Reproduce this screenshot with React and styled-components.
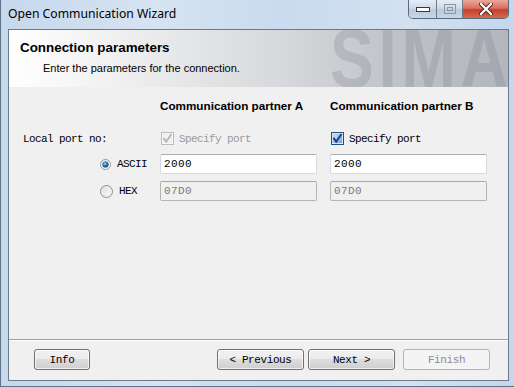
import styled, { createGlobalStyle } from 'styled-components';

const GlobalStyle = createGlobalStyle`
  html, body {
    margin: 0;
    padding: 0;
    width: 514px;
    height: 387px;
    overflow: hidden;
  }
  * {
    box-sizing: border-box;
  }
`;

const Window = styled.div`
  width: 514px;
  height: 387px;
  display: flex;
  flex-direction: column;
  padding: 0 5px 5px 7px;
  border: 1px solid #5f7287;
  border-top: none;
  border-right: none;
  background: linear-gradient(90deg, #c6d8ec 0%, #d6e3f2 30%, #c9dbee 55%, #d3e1f1 80%, #c4d7ec 100%);
`;

const TitleBar = styled.div`
  height: 29px;
  display: flex;
  align-items: flex-start;
  justify-content: space-between;
`;

const Title = styled.div`
  padding-top: 6px;
  font-family: 'Noto Sans', sans-serif;
  font-size: 12.2px;
  line-height: 16px;
  color: #000;
`;

const CaptionGroup = styled.div`
  display: flex;
  height: 19px;
  border: 1px solid #5a6a7e;
  border-top: none;
  border-radius: 0 0 5px 5px;
  overflow: hidden;
`;

const CaptionButton = styled.div`
  width: ${(p) => p.$w}px;
  height: 100%;
  display: flex;
  align-items: center;
  justify-content: center;
  background: ${(p) =>
    p.$close
      ? 'linear-gradient(180deg, #e9a99b 0%, #d9705f 45%, #c4402c 55%, #d66a4e 100%)'
      : 'linear-gradient(180deg, #e5edf6 0%, #cfdbe8 45%, #bccbdc 55%, #c8d6e6 100%)'};
  & + & {
    border-left: 1px solid #6a7b90;
  }
`;

const Client = styled.div`
  flex: 1;
  display: flex;
  flex-direction: column;
  border: 1px solid #6c7986;
  background: #f0f0f0;
`;

const Header = styled.div`
  position: relative;
  height: 57px;
  overflow: hidden;
  padding: 10px 0 0 11px;
  background: linear-gradient(90deg, #ffffff 0%, #f1f1f2 20%, #d6d8db 55%, #bdc0c5 80%, #b3b7bd 100%);
`;

const Watermark = styled.div`
  position: absolute;
  left: 321px;
  top: 0;
  height: 57px;
  font-family: 'Liberation Sans', sans-serif;
  font-weight: bold;
  font-size: 84px;
  line-height: 57px;
  color: rgba(110, 116, 128, 0.22);
  transform: scaleX(0.78);
  transform-origin: left top;
  letter-spacing: 6px;
  white-space: nowrap;
  pointer-events: none;
`;

const HeaderTitle = styled.div`
  position: relative;
  font-family: 'Liberation Sans', sans-serif;
  font-weight: bold;
  font-size: 13.4px;
  line-height: 16px;
  color: #000;
`;

const HeaderSub = styled.div`
  position: relative;
  margin: 5px 0 0 23px;
  font-family: 'Liberation Sans', sans-serif;
  font-size: 11px;
  line-height: 14px;
  color: #000;
`;

const Body = styled.div`
  flex: 1;
  padding: 11px 0 0 14px;
`;

const Grid = styled.div`
  display: grid;
  grid-template-columns: 124px 157px 157px;
  grid-template-rows: 15px 27px 20px 20px;
  column-gap: 13px;
  row-gap: 7px;
`;

const ColumnHead = styled.div`
  grid-column: ${(p) => p.$col};
  font-family: 'Liberation Sans', sans-serif;
  font-weight: bold;
  font-size: 11.7px;
  line-height: 15px;
  color: #000;
  white-space: nowrap;
`;

const Mono = styled.span`
  font-family: 'Liberation Mono', 'DejaVu Sans Mono', monospace;
  font-size: 11px;
  letter-spacing: -0.6px;
  color: ${(p) => (p.$disabled ? '#9a9a9a' : '#000')};
  white-space: nowrap;
`;

const RowLabel = styled.div`
  align-self: end;
  height: 17px;
  display: flex;
  align-items: center;
`;

const CheckRow = styled.label`
  align-self: end;
  height: 17px;
  display: flex;
  align-items: center;
  gap: 5px;
  padding-left: 1px;
`;

const RadioRow = styled.label`
  display: flex;
  align-items: center;
  gap: 6px;
  padding-left: 77px;
`;

const Field = styled.div`
  height: 20px;
  display: flex;
  align-items: center;
  padding-left: 3px;
  border: 1px solid ${(p) => (p.$disabled ? '#b5b5b5' : '#d5dbe3')};
  border-top-color: ${(p) => (p.$disabled ? '#a8a8a8' : '#abadb3')};
  border-radius: 2px;
  background: ${(p) => (p.$disabled ? '#f0f0f0' : '#ffffff')};
`;

const FieldText = styled.span`
  font-family: 'Liberation Mono', 'DejaVu Sans Mono', monospace;
  font-size: 11px;
  letter-spacing: 0.4px;
  color: ${(p) => (p.$disabled ? '#7a7a7a' : '#000')};
`;

const Footer = styled.div`
  height: 41px;
  display: flex;
  align-items: flex-start;
  padding: 9px 18px 0 25px;
  border-top: 1px solid #a0a0a0;
  box-shadow: inset 0 1px 0 #ffffff;
`;

const Button = styled.div`
  width: ${(p) => p.$w}px;
  height: 21px;
  margin-left: ${(p) => p.$ml || 0}px;
  display: flex;
  align-items: center;
  justify-content: center;
  border: 1px solid ${(p) => (p.$disabled ? '#b1b5b8' : '#707070')};
  border-radius: 3px;
  background: ${(p) =>
    p.$disabled
      ? '#f4f4f4'
      : 'linear-gradient(180deg, #f2f2f2 0%, #ebebeb 49%, #dddddd 50%, #cfcfcf 100%)'};
  box-shadow: inset 0 0 0 1px ${(p) => (p.$disabled ? '#f4f4f4' : 'rgba(255,255,255,0.7)')};
`;

const ButtonText = styled.span`
  font-family: 'Liberation Mono', 'DejaVu Sans Mono', monospace;
  font-size: 11px;
  letter-spacing: -0.4px;
  color: ${(p) => (p.$disabled ? '#8d8d8d' : '#000')};
  white-space: pre;
`;

function CheckBox({ checked, disabled }) {
  return (
    <svg width="13" height="13" viewBox="0 0 13 13">
      <defs>
        <linearGradient id="cbOn" x1="0" y1="0" x2="1" y2="1">
          <stop offset="0" stopColor="#cfe7fa" />
          <stop offset="1" stopColor="#6fa8d8" />
        </linearGradient>
      </defs>
      <rect x="0.5" y="0.5" width="12" height="12" fill="#fff" stroke={disabled ? '#bcbcbc' : '#1c5180'} />
      <rect x="2" y="2" width="9" height="9" fill={disabled ? '#f4f4f4' : 'url(#cbOn)'} stroke={disabled ? '#e0e0e0' : '#7fa9d1'} strokeWidth="0.6" />
      {checked && (
        <path
          d="M3 6.6 L5.2 9.6 L10 2.8"
          fill="none"
          stroke={disabled ? '#b5b5b5' : '#1a3486'}
          strokeWidth="1.8"
          strokeLinecap="square"
        />
      )}
    </svg>
  );
}

function Radio({ checked }) {
  return (
    <svg width="13" height="13" viewBox="0 0 13 13">
      <defs>
        <linearGradient id="rdBg" x1="0" y1="0" x2="1" y2="1">
          <stop offset="0" stopColor="#dcdcdc" />
          <stop offset="1" stopColor="#ffffff" />
        </linearGradient>
        <radialGradient id="rdDot" cx="0.4" cy="0.35" r="0.7">
          <stop offset="0" stopColor="#9fd6f6" />
          <stop offset="0.5" stopColor="#2a80c1" />
          <stop offset="1" stopColor="#123f6b" />
        </radialGradient>
      </defs>
      <circle cx="6.5" cy="6.5" r="6" fill="url(#rdBg)" stroke="#8f8f8f" />
      <circle cx="6.5" cy="6.5" r="4.5" fill="none" stroke="#e8e8e8" strokeWidth="1" />
      {checked && <circle cx="6.5" cy="6.5" r="3.4" fill="url(#rdDot)" stroke="#1b4c7e" strokeWidth="0.6" />}
    </svg>
  );
}

function Captions() {
  return (
    <CaptionGroup>
      <CaptionButton $w={27}>
        <svg width="14" height="7" viewBox="0 0 14 7">
          <rect x="0.5" y="1.5" width="13" height="4" fill="#fff" stroke="#2f3a48" />
        </svg>
      </CaptionButton>
      <CaptionButton $w={26}>
        <svg width="12" height="10" viewBox="0 0 12 10">
          <rect x="0.5" y="0.5" width="11" height="9" fill="none" stroke="#8b98a8" />
          <rect x="3.5" y="3.5" width="5" height="3" fill="none" stroke="#8b98a8" />
        </svg>
      </CaptionButton>
      <CaptionButton $w={46} $close>
        <svg width="14" height="12" viewBox="0 0 14 12">
          <path d="M2 1 L12 11 M12 1 L2 11" stroke="#4a1a14" strokeWidth="4" strokeLinecap="round" />
          <path d="M2 1 L12 11 M12 1 L2 11" stroke="#fff" strokeWidth="2.4" strokeLinecap="round" />
        </svg>
      </CaptionButton>
    </CaptionGroup>
  );
}

export default function App() {
  return (
    <>
      <GlobalStyle />
      <Window>
        <TitleBar>
          <Title>Open Communication Wizard</Title>
          <Captions />
        </TitleBar>
        <Client>
          <Header>
            <Watermark>SIMATIC</Watermark>
            <HeaderTitle>Connection parameters</HeaderTitle>
            <HeaderSub>Enter the parameters for the connection.</HeaderSub>
          </Header>
          <Body>
            <Grid>
              <ColumnHead $col={2}>Communication partner A</ColumnHead>
              <ColumnHead $col={3}>Communication partner B</ColumnHead>

              <RowLabel>
                <Mono>Local port no:</Mono>
              </RowLabel>
              <CheckRow>
                <CheckBox checked disabled />
                <Mono $disabled>Specify port</Mono>
              </CheckRow>
              <CheckRow>
                <CheckBox checked />
                <Mono>Specify port</Mono>
              </CheckRow>

              <RadioRow>
                <Radio checked />
                <Mono>ASCII</Mono>
              </RadioRow>
              <Field>
                <FieldText>2000</FieldText>
              </Field>
              <Field>
                <FieldText>2000</FieldText>
              </Field>

              <RadioRow>
                <Radio />
                <Mono>HEX</Mono>
              </RadioRow>
              <Field $disabled>
                <FieldText $disabled>07D0</FieldText>
              </Field>
              <Field $disabled>
                <FieldText $disabled>07D0</FieldText>
              </Field>
            </Grid>
          </Body>
          <Footer>
            <Button $w={56}>
              <ButtonText>Info</ButtonText>
            </Button>
            <Button $w={87} $ml={127}>
              <ButtonText>{'< Previous'}</ButtonText>
            </Button>
            <Button $w={87} $ml={4}>
              <ButtonText>{'Next >'}</ButtonText>
            </Button>
            <Button $w={87} $ml={8} $disabled>
              <ButtonText $disabled>Finish</ButtonText>
            </Button>
          </Footer>
        </Client>
      </Window>
    </>
  );
}
